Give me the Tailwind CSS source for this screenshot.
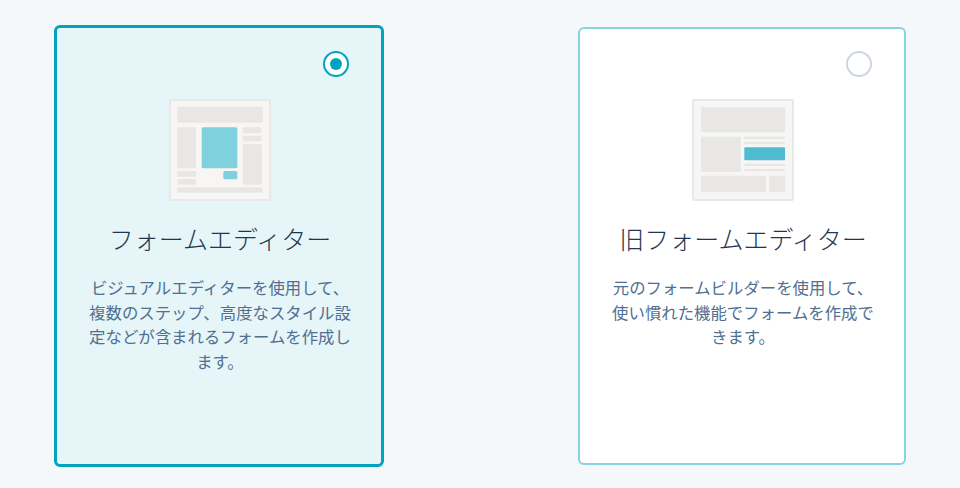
<!DOCTYPE html>
<html lang="ja">
<head>
    <meta charset="UTF-8">
    <title>フォームエディター</title>
    <script src="https://cdn.jsdelivr.net/npm/@tailwindcss/browser@4"></script>
</head>
<body class="bg-[#f5f8fa] font-['Noto_Sans_CJK_JP',sans-serif] overflow-hidden">
    <div class="h-[488px] w-[960px] px-[54px] pt-[4px] flex justify-between items-center">
        <!-- Selected card -->
        <div class="relative w-[330px] h-[442px] bg-[#e5f5f8] border-[3px] border-[#00a4bd] rounded-[6px] flex flex-col items-center pt-[71px] pl-[2px]">
            <div class="absolute left-[266px] top-[23px] w-[26px] h-[26px] rounded-full bg-white border-2 border-[#00a4bd] flex items-center justify-center">
                <div class="w-[12px] h-[12px] rounded-full bg-[#00a4bd]"></div>
            </div>
            <svg width="102" height="102" viewBox="0 0 102 102">
                <rect x="1" y="1" width="100" height="100" fill="#f7f6f5" stroke="#e9e8e6" stroke-width="2"/>
                <g fill="#e8e7e5">
                    <rect x="8.3" y="7.7" width="85.4" height="16" rx="1.5"/>
                    <rect x="8.3" y="28.3" width="18.7" height="41" rx="1.5"/>
                    <rect x="73.7" y="28.3" width="19" height="6" rx="1.5"/>
                    <rect x="73.7" y="36.7" width="19" height="5.6" rx="1.5"/>
                    <rect x="73.7" y="45" width="19" height="40.7" rx="1.5"/>
                    <rect x="8.3" y="72" width="18.7" height="5.7" rx="1.5"/>
                    <rect x="8.3" y="80" width="18.7" height="5.7" rx="1.5"/>
                    <rect x="8.3" y="88.3" width="85.4" height="5.4" rx="1.5"/>
                </g>
                <rect x="32.7" y="28.3" width="35.6" height="41" rx="1.5" fill="#7fd1de"/>
                <rect x="54.3" y="72" width="14" height="8.3" rx="1.5" fill="#7fd1de"/>
            </svg>
            <h2 class="mt-[18px] text-[25px] leading-[38px] font-light text-[#1f3850]">フォームエディター</h2>
            <p class="mt-[18px] w-[264px] text-[16.4px] leading-[24.6px] font-normal text-[#516f90] text-center">ビジュアルエディターを使用して、複数のステップ、高度なスタイル設定などが含まれるフォームを作成します。</p>
        </div>

        <!-- Unselected card -->
        <div class="relative w-[328px] h-[438px] bg-white border-2 border-[#84d4e2] rounded-[6px] flex flex-col items-center pt-[70px] pl-[2px]">
            <div class="absolute left-[266px] top-[22px] w-[26px] h-[26px] rounded-full bg-white border-2 border-[#cbd6e2]"></div>
            <svg width="102" height="102" viewBox="0 0 102 102">
                <rect x="1" y="1" width="100" height="100" rx="1" fill="#f7f6f5" stroke="#e9e8e6" stroke-width="2"/>
                <g fill="#e8e7e5">
                    <rect x="9" y="8.3" width="84" height="25"/>
                    <rect x="9" y="37.7" width="39.7" height="35.3"/>
                    <rect x="52.3" y="37.7" width="40.7" height="2.3"/>
                    <rect x="52.3" y="43" width="40.7" height="2.3"/>
                    <rect x="52.3" y="64.7" width="40.7" height="2.3"/>
                    <rect x="52.3" y="70" width="40.7" height="2.3"/>
                    <rect x="9" y="76.7" width="64.7" height="16.3"/>
                    <rect x="77" y="76.7" width="16" height="16.3"/>
                </g>
                <rect x="52.3" y="48.3" width="40.7" height="13" rx="1" fill="#4fbdd1"/>
            </svg>
            <h2 class="mt-[18px] text-[25px] leading-[38px] font-light text-[#1f3850]">旧フォームエディター</h2>
            <p class="mt-[18px] w-[264px] text-[16.4px] leading-[24.6px] font-normal text-[#516f90] text-center">元のフォームビルダーを使用して、使い慣れた機能でフォームを作成できます。</p>
        </div>
    </div>
</body>
</html>
